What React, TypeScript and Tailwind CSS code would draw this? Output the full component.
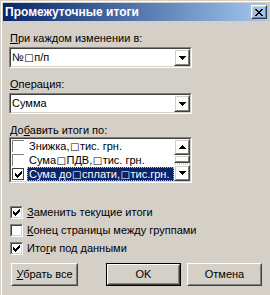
import React from "react";

const Raised = ({ className = "", children }: { className?: string; children?: React.ReactNode }) => (
  <div className={`border-t border-l border-t-white border-l-white border-r border-b border-r-[#404040] border-b-[#404040] ${className}`}>
    <div className="w-full h-full border-r border-b border-r-[#808080] border-b-[#808080] border-t border-l border-t-[#d4d0c8] border-l-[#d4d0c8] flex items-center justify-center">
      {children}
    </div>
  </div>
);

const Sunken = ({ className = "", children }: { className?: string; children?: React.ReactNode }) => (
  <div className={`border-t border-l border-t-[#808080] border-l-[#808080] border-r border-b border-r-white border-b-white ${className}`}>
    <div className="w-full h-full border-t border-l border-t-[#404040] border-l-[#404040] border-r border-b border-r-[#d4d0c8] border-b-[#d4d0c8] bg-white flex">
      {children}
    </div>
  </div>
);

const Arrow = ({ up = false }: { up?: boolean }) => (
  <svg width="7" height="4" viewBox="0 0 7 4" className={up ? "rotate-180" : ""}>
    <path d="M0 0h7v1H6v1H5v1H4v1H3V3H2V2H1V1H0z" fill="#000" />
  </svg>
);

const Check = () => (
  <svg width="7" height="7" viewBox="0 0 7 7">
    <path d="M6 0h1v3H6v1H5v1H4v1H3v1H2V6H1V5H0V2h1v1h1v1h1V3h1V2h1V1h1z" fill="#000" />
  </svg>
);

// the missing-glyph box shown in place of non-breaking spaces
const Box = () => <span className="font-['DejaVu_Sans',sans-serif] text-[10px] mx-[0.5px]">□</span>;

// replaces every □ in a string with the Box glyph
const withBoxes = (text: string) =>
  text.split("□").map((part, i, arr) => (
    <React.Fragment key={i}>
      {part}
      {i < arr.length - 1 && <Box />}
    </React.Fragment>
  ));

const Combo = ({ value }: { value: string }) => (
  <Sunken className="w-[183px] h-[21px]">
    <div className="flex-1 pl-[1px] leading-[15px] pt-[1px] whitespace-nowrap">{withBoxes(value)}</div>
    <Raised className="w-[16px] h-[17px]">
      <Arrow />
    </Raised>
  </Sunken>
);

const CheckRow = ({ checked, lead, rest, mid }: { checked: boolean; lead: string; mid?: string; rest: string }) => (
  <div className="flex items-center h-[13px] gap-[4px] pl-[1px]">
    <Sunken className="w-[13px] h-[13px]">
      <div className="w-full h-full flex items-center justify-center">{checked && <Check />}</div>
    </Sunken>
    <span className="leading-[13px]">
      {lead}
      <span className="underline">{mid}</span>
      {rest}
    </span>
  </div>
);

const ListItem = ({ text, checked = false, selected = false }: { text: string; checked?: boolean; selected?: boolean }) => (
  <div className="flex items-center h-[14px]">
    <div
      className={
        selected
          ? "w-[12px] h-[12px] ml-[1px] border border-[#404040] bg-white flex items-center justify-center"
          : "w-[12px] h-[12px] ml-[1px] border-t border-l border-[#808080] border-r-[#d4d0c8] border-b-[#d4d0c8] bg-white flex items-center justify-center"
      }
    >
      {checked && <Check />}
    </div>
    <div
      className={
        selected
          ? "ml-[3px] flex-1 h-[14px] bg-[#0a246a] text-white border border-dotted border-[#c8c0a0] pl-[1px] leading-[12px] whitespace-nowrap"
          : "ml-[3px] flex-1 h-[14px] pl-[2px] leading-[14px] whitespace-nowrap"
      }
    >
      {withBoxes(text)}
    </div>
  </div>
);

export default function App() {
  return (
    <div className="w-[270px] h-[295px] border-t border-l border-[#d4d0c8] border-r-[#404040] border-b-[#404040] bg-[#d4d0c8] font-['Liberation_Sans',Arial,sans-serif] text-[11px] text-black">
      <div className="w-full h-full border-t border-l border-white border-r-[#808080] border-b-[#808080] p-[1px]">
        <div className="h-[18px] bg-gradient-to-r from-[#0a246a] to-[#a6caf0] flex items-center justify-between pl-[2px] pr-[2px]">
          <span className="text-white font-bold text-[12px] leading-[14px]">Промежуточные итоги</span>
          <Raised className="w-[16px] h-[14px]">
            <svg width="8" height="7" viewBox="0 0 8 7">
              <path d="M0 0h2v1h1v1h2V1h1V0h2v1H7v1H6v1H5v1h1v1h1v1h1v1H6V6H5V5H3v1H2v1H0V6h1V5h1V4h1V3H2V2H1V1H0z" fill="#000" />
            </svg>
          </Raised>
        </div>

        <div className="pl-[6px] flex flex-col">
          <div className="mt-[11px] h-[13px] leading-[13px] pl-[1px]">
            <span className="underline">П</span>ри каждом изменении в:
          </div>
          <div className="mt-[2px]">
            <Combo value="№□п/п" />
          </div>

          <div className="mt-[10px] h-[13px] leading-[13px] pl-[1px]">
            <span className="underline">О</span>перация:
          </div>
          <div className="mt-[2px]">
            <Combo value="Сумма" />
          </div>

          <div className="mt-[10px] h-[13px] leading-[13px] pl-[1px]">
            До<span className="underline">б</span>авить итоги по:
          </div>
          <Sunken className="w-[183px] h-[46px]">
            <div className="flex-1 flex flex-col">
              <ListItem text="Знижка,□тис. грн." />
              <ListItem text="Сума□ПДВ,□тис. грн." />
              <ListItem text="Сума до□сплати,□тис.грн." checked selected />
            </div>
            <div className="w-[16px] flex flex-col">
              <Raised className="w-[16px] h-[16px]">
                <Arrow up />
              </Raised>
              <Raised className="w-[16px] h-[8px]" />
              <div className="h-[2px] bg-[repeating-linear-gradient(90deg,#ffffff_0,#ffffff_1px,#d4d0c8_1px,#d4d0c8_2px)]" />
              <Raised className="w-[16px] h-[16px]">
                <Arrow />
              </Raised>
            </div>
          </Sunken>

          <div className="mt-[23px] flex flex-col gap-[5px]">
            <CheckRow checked lead="" mid="З" rest="аменить текущие итоги" />
            <CheckRow checked={false} lead="" mid="К" rest="онец страницы между группами" />
            <CheckRow checked lead="Ито" mid="г" rest="и под данными" />
          </div>

          <div className="mt-[8px] flex items-start">
            <Raised className="ml-[2px] w-[67px] h-[23px]">
              <span>
                <span className="underline">У</span>брать все
              </span>
            </Raised>
            <div className="ml-[28px] w-[75px] h-[23px] border border-black">
              <Raised className="w-full h-full">
                <span>OK</span>
              </Raised>
            </div>
            <Raised className="ml-[6px] w-[75px] h-[23px]">
              <span>Отмена</span>
            </Raised>
          </div>
        </div>
      </div>
    </div>
  );
}
